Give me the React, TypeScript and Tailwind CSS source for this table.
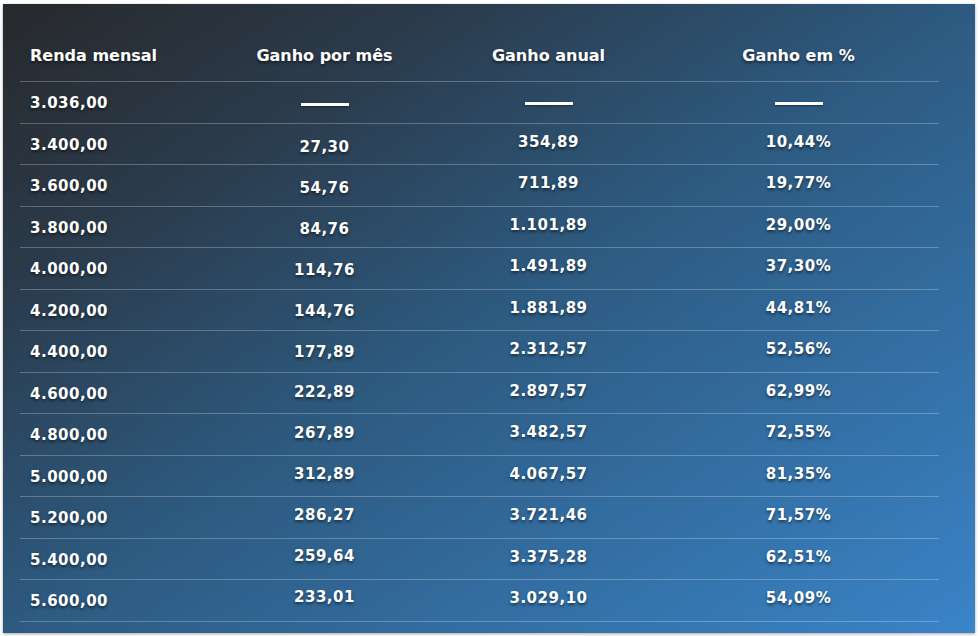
import React from "react";

const rows: [string, string, string, string][] = [
  ["3.036,00", "-", "-", "-"],
  ["3.400,00", "27,30", "354,89", "10,44%"],
  ["3.600,00", "54,76", "711,89", "19,77%"],
  ["3.800,00", "84,76", "1.101,89", "29,00%"],
  ["4.000,00", "114,76", "1.491,89", "37,30%"],
  ["4.200,00", "144,76", "1.881,89", "44,81%"],
  ["4.400,00", "177,89", "2.312,57", "52,56%"],
  ["4.600,00", "222,89", "2.897,57", "62,99%"],
  ["4.800,00", "267,89", "3.482,57", "72,55%"],
  ["5.000,00", "312,89", "4.067,57", "81,35%"],
  ["5.200,00", "286,27", "3.721,46", "71,57%"],
  ["5.400,00", "259,64", "3.375,28", "62,51%"],
  ["5.600,00", "233,01", "3.029,10", "54,09%"],
];

function Cell({ v }: { v: string }) {
  if (v === "-") {
    return <div className="w-[48px] h-[3px] mt-[2px] bg-white shadow-[0_1px_2px_rgba(0,0,0,0.4)]" />;
  }
  return <span>{v}</span>;
}

export default function App() {
  return (
    <div className="w-[980px] h-[636px] bg-white overflow-hidden pt-[4px] pl-[3px]">
      <div
        className="w-[972px] h-[629px] pl-[17px] pr-[36px] text-white font-bold shadow-[0_1px_3px_rgba(0,0,0,0.35)] bg-[linear-gradient(to_bottom_right,#27292c_0%,#2b3a4a_22%,#2d5a80_50%,#3a84c8_100%)] [text-shadow:0_2px_3px_rgba(0,0,0,0.5)]"
        style={{ fontFamily: '"DejaVu Sans", sans-serif' }}
      >
        <div className="grid grid-cols-[193px_223px_225px_278px] h-[78px] pt-[42px] border-b border-white/25 text-[16px] leading-[20px]">
          <div className="pl-[10px]">Renda mensal</div>
          <div className="text-center">Ganho por mês</div>
          <div className="text-center">Ganho anual</div>
          <div className="text-center pr-[3px]">Ganho em %</div>
        </div>
        {rows.map((r, i) => {
          const shift = i === 0 ? 0 : 2 - (6 * (i - 1)) / 11;
          return (
            <div
              key={i}
              className="grid grid-cols-[193px_223px_225px_278px] h-[41.5px] items-center border-b border-white/25 text-[15px] tracking-[0.5px] leading-[20px]"
            >
              <div className="pl-[10px] pt-[2px]">{r[0]}</div>
              <div className="flex justify-center" style={{ paddingTop: `${Math.max(0, shift * 2 + 2)}px`, paddingBottom: `${Math.max(0, -shift * 2 - 2)}px` }}>
                <Cell v={r[1]} />
              </div>
              <div className={i === 0 ? "flex justify-center" : "flex justify-center pb-[4px]"}>
                <Cell v={r[2]} />
              </div>
              <div className={i === 0 ? "flex justify-center pr-[3px]" : "flex justify-center pr-[3px] pb-[4px]"}>
                <Cell v={r[3]} />
              </div>
            </div>
          );
        })}
      </div>
    </div>
  );
}
